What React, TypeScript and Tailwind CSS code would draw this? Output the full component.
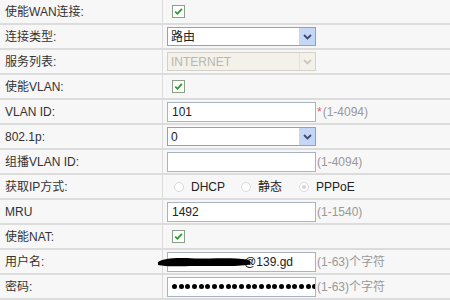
import React from "react";

const font = { fontFamily: '"Liberation Sans", Arial, "Noto Sans CJK SC", sans-serif' };

function Check() {
  return (
    <div className="w-[13px] h-[13px] border border-[#8aa08a] bg-white flex items-center justify-center ml-[9px]">
      <svg width="9" height="9" viewBox="0 0 9 9">
        <path d="M1.2 4.6 L3.5 6.8 L7.8 1.8" stroke="#2f9a2f" strokeWidth="1.8" fill="none" />
      </svg>
    </div>
  );
}

function Chevron({ color }: { color: string }) {
  return (
    <svg width="9" height="6" viewBox="0 0 9 6">
      <path d="M1 1 L4.5 4.5 L8 1" stroke={color} strokeWidth="1.8" fill="none" />
    </svg>
  );
}

function Select({ text, disabled }: { text: string; disabled?: boolean }) {
  return (
    <div
      className={`ml-[4px] w-[149px] h-[19px] border flex items-center ${
        disabled ? "border-[#d4d2c8] bg-[#f3f1e9]" : "border-[#8fa2b8] bg-white"
      }`}
    >
      <div className={`flex-1 pl-[3px] text-[12px] ${disabled ? "text-[#b8b8b0]" : "text-[#222]"}`}>{text}</div>
      <div
        className={`w-[16px] h-[17px] flex items-center justify-center ${
          disabled ? "bg-[#f3f1e9] border-l border-[#e4e2da]" : "bg-[#c6d6f6]"
        }`}
      >
        <Chevron color={disabled ? "#c8c8c0" : "#3c4d74"} />
      </div>
    </div>
  );
}

function Input({ text, w = 149 }: { text?: React.ReactNode; w?: number }) {
  return (
    <div
      className="ml-[4px] h-[20px] border border-[#a9b3bf] bg-white flex items-center pl-[4px] text-[12px] text-[#222] overflow-hidden whitespace-nowrap shrink-0"
      style={{ width: w }}
    >
      {text}
    </div>
  );
}

function Hint({ children, star }: { children: React.ReactNode; star?: boolean }) {
  return (
    <span className="ml-[1px] text-[12px] text-[#999] whitespace-nowrap">
      {star && <span className="text-[#e06060] mr-[1px]">*</span>}
      {children}
    </span>
  );
}

function Radio({ checked, label, ml }: { checked?: boolean; label: string; ml: string }) {
  return (
    <div className={`flex items-center ${ml}`}>
      <div className="w-[10px] h-[10px] rounded-full border border-[#dadada] bg-white flex items-center justify-center">
        {checked && <div className="w-[4px] h-[4px] rounded-full bg-[#d4d4d4]" />}
      </div>
      <span className="ml-[7px] text-[12px] text-[#222]">{label}</span>
    </div>
  );
}

function Row({ label, children }: { label: string; children?: React.ReactNode }) {
  return (
    <div className="flex h-[25px] border-b-2 border-[#dcdcdc]">
      <div className="w-[163px] shrink-0 border-r border-[#dcdcdc] flex items-center pl-[5px] text-[12px] text-[#333]">
        {label}
      </div>
      <div className="flex-1 flex items-center">{children}</div>
    </div>
  );
}

export default function App() {
  const dots = Array.from({ length: 22 });
  return (
    <div className="w-[450px] h-[300px] overflow-hidden bg-[#f7f7f7]" style={font}>
      <Row label="使能WAN连接:">
        <Check />
      </Row>
      <Row label="连接类型:">
        <Select text="路由" />
      </Row>
      <Row label="服务列表:">
        <Select text="INTERNET" disabled />
      </Row>
      <Row label="使能VLAN:">
        <Check />
      </Row>
      <Row label="VLAN ID:">
        <Input text="101" />
        <Hint star>(1-4094)</Hint>
      </Row>
      <Row label="802.1p:">
        <Select text="0" />
      </Row>
      <Row label="组播VLAN ID:">
        <Input />
        <Hint>(1-4094)</Hint>
      </Row>
      <Row label="获取IP方式:">
        <Radio label="DHCP" ml="ml-[11px]" />
        <Radio label="静态" ml="ml-[16px]" />
        <Radio label="PPPoE" ml="ml-[17px]" checked />
      </Row>
      <Row label="MRU">
        <Input text="1492" />
        <Hint>(1-1540)</Hint>
      </Row>
      <Row label="使能NAT:">
        <Check />
      </Row>
      <Row label="用户名:">
        <div className="relative">
          <Input text={<span className="ml-auto pr-[22px]">@139.gd</span>} />
          <svg className="absolute left-[-8px] top-[4px]" width="100" height="12" viewBox="0 0 100 12">
            <path
              d="M3 6 C 10 2, 20 1.5, 40 2.5 C 60 2.5, 80 1.5, 92 3.5 C 97 5, 97 8, 92 9 C 80 10.5, 60 10, 40 10 C 20 10.5, 10 10.5, 3 9 Z"
              fill="#000"
            />
          </svg>
        </div>
        <Hint>(1-63)个字符</Hint>
      </Row>
      <Row label="密码:">
        <Input
          text={
            <div className="flex items-center gap-[1.7px]">
              {dots.map((_, i) => (
                <div key={i} className="w-[5px] h-[5px] rounded-full bg-black shrink-0" />
              ))}
            </div>
          }
        />
        <Hint>(1-63)个字符</Hint>
      </Row>
    </div>
  );
}
